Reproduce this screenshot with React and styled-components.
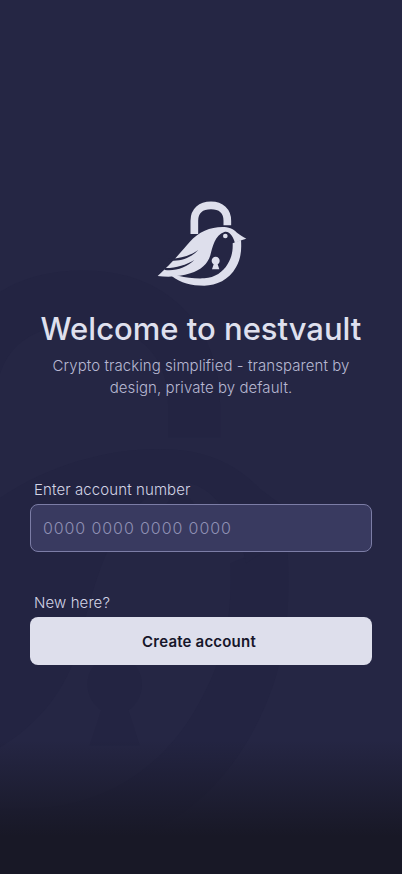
import styled, { createGlobalStyle } from "styled-components";

const GlobalStyle = createGlobalStyle`
    * {
        box-sizing: border-box;
    }
    html, body {
        margin: 0;
        padding: 0;
        background: #252644;
    }
`;

const Page = styled.div`
    position: relative;
    width: 402px;
    height: 874px;
    overflow: hidden;
    padding: 190px 30px 0;
    display: flex;
    flex-direction: column;
    background: #252644;
    font-family: Inter, "Open Sans", sans-serif;
`;

const Watermark = styled.div`
    position: absolute;
    left: -393px;
    top: 190px;
    width: 816px;
    height: 770px;
`;

const BottomFade = styled.div`
    position: absolute;
    left: 0;
    right: 0;
    bottom: 0;
    height: 134px;
    background: linear-gradient(to bottom, rgba(24, 24, 38, 0) 0%, rgba(24, 24, 38, 1) 72%);
`;

const Hero = styled.div`
    position: relative;
    display: flex;
    flex-direction: column;
    align-items: center;
`;

const LogoBox = styled.div`
    width: 120px;
    height: 110px;
`;

const Title = styled.h1`
    margin: 9px 0 0;
    font-size: 31px;
    line-height: 40px;
    font-weight: 500;
    color: #dfe0ee;
    white-space: nowrap;
`;

const Subtitle = styled.p`
    margin: 6px 0 0;
    width: 310px;
    font-size: 15px;
    line-height: 22px;
    font-weight: 300;
    letter-spacing: 0.07px;
    text-align: center;
    color: #b7b8d2;
`;

const Form = styled.div`
    position: relative;
    margin-top: 81px;
    display: flex;
    flex-direction: column;
`;

const Label = styled.label`
    padding-left: 4px;
    margin-bottom: 4px;
    font-size: 15px;
    line-height: 20px;
    font-weight: 300;
    letter-spacing: 0.1px;
    color: #d3d4e6;
`;

const AccountInput = styled.input`
    width: 100%;
    height: 48px;
    padding: 0 12px;
    margin-bottom: 41px;
    border: 1px solid #7c7da6;
    border-radius: 8px;
    background: #393a60;
    color: #dfe0ee;
    font-family: inherit;
    font-size: 16px;
    font-weight: 300;
    letter-spacing: 0.9px;
    outline: none;

    &::placeholder {
        color: #8f90b4;
        opacity: 1;
    }
`;

const CreateButton = styled.button`
    width: 100%;
    height: 48px;
    padding: 0 4px 0 0;
    border: none;
    border-radius: 8px;
    background: #dedfec;
    color: #16162a;
    font-family: inherit;
    font-size: 15px;
    font-weight: 600;
    letter-spacing: 0.2px;
    cursor: pointer;
`;

function BirdLock({ color, cut }) {
    return (
        <svg viewBox="0 0 360 330" width="100%" height="100%" preserveAspectRatio="none">
            {/* shackle */}
            <path
                d="M160 132V92C160 62 180 46 210 46C240 46 259 64 259 92V106"
                fill="none"
                stroke={color}
                strokeWidth="23"
            />
            {/* ring */}
            <path
                d="M300 150C302 180 300 205 285 232C264 270 226 287 190 287C150 287 120 280 92 258L115 258C135 264 165 266 190 265C222 263 246 246 260 222C272 202 276 184 275 160Z"
                fill={color}
            />
            {/* bird */}
            <path
                d="M316 146C305 140 296 134 288 128C276 116 262 111 244 111C208 111 172 126 146 156C120 186 88 224 50 258C84 262 118 260 148 250C180 240 200 222 208 196C214 172 222 134 250 126C266 122 278 142 282 160C290 154 302 150 316 146Z"
                fill={color}
            />
            {/* eye */}
            <circle cx="253" cy="138" r="7" fill={color} />
            {/* keyhole */}
            <path
                d="M224 200C231 200 236 205 236 212C236 217 233 221 230 223L235 238H213L218 223C215 221 212 217 212 212C212 205 217 200 224 200Z"
                fill={color}
            />
            {/* wing feathers */}
            <path d="M80 205C112 208 146 198 172 180C150 204 116 216 84 211Z" fill={cut} />
            <path d="M66 234C100 236 134 226 160 210C138 232 104 244 72 240Z" fill={cut} />
        </svg>
    );
}

export default function App() {
    return (
        <Page>
            <GlobalStyle />
            <Watermark>
                <BirdLock color="#232442" cut="#252644" />
            </Watermark>
            <BottomFade />
            <Hero>
                <LogoBox>
                    <BirdLock color="#dedfec" cut="#252644" />
                </LogoBox>
                <Title>Welcome to nestvault</Title>
                <Subtitle>Crypto tracking simplified - transparent by design, private by default.</Subtitle>
            </Hero>
            <Form>
                <Label htmlFor="account">Enter account number</Label>
                <AccountInput id="account" placeholder="0000 0000 0000 0000" />
                <Label>New here?</Label>
                <CreateButton>Create account</CreateButton>
            </Form>
        </Page>
    );
}
